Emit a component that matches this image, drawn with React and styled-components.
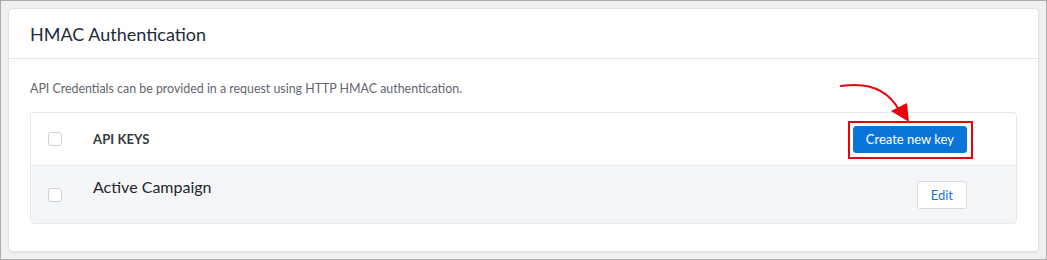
import React from "react";
import styled, { createGlobalStyle } from "styled-components";

const GlobalStyle = createGlobalStyle`
  html, body {
    margin: 0;
    padding: 0;
    background: #ffffff;
  }
  body {
    font-family: Lato, "Open Sans", "Liberation Sans", sans-serif;
    -webkit-font-smoothing: antialiased;
  }
  * {
    box-sizing: border-box;
  }
`;

const Frame = styled.div`
  width: 1047px;
  height: 260px;
  padding: 7px;
  border: 1px solid #ababab;
  background: #f0f0f0;
`;

const Card = styled.section`
  height: 244px;
  background: #ffffff;
  border: 1px solid #e2e2e2;
  border-radius: 4px;
  box-shadow: 0 1px 2px rgba(0, 0, 0, 0.06);
`;

const CardHeader = styled.header`
  display: flex;
  align-items: center;
  height: 50px;
  padding: 0 21px;
  border-bottom: 1px solid #e4e6ea;
  h2 {
    margin: 0;
    font-size: 18px;
    font-weight: 400;
    color: #1d2b3a;
  }
`;

const CardBody = styled.div`
  padding: 22px 21px 0;
`;

const Description = styled.p`
  margin: 0 0 15px;
  font-size: 12.4px;
  line-height: 16px;
  color: #5f6670;
`;

const Table = styled.div`
  border: 1px solid #e6e8ec;
  border-radius: 4px;
`;

const Row = styled.div`
  display: grid;
  grid-template-columns: 45px 1fr auto;
  align-items: ${(props) => (props.head ? "center" : "start")};
  height: ${(props) => (props.head ? "53px" : "57px")};
  padding: 0 49px 0 17px;
  background: ${(props) => (props.shaded ? "#f5f6f8" : "#ffffff")};
  border-bottom: ${(props) => (props.head ? "1px solid #e6e8ec" : "none")};
  border-radius: ${(props) => (props.head ? "4px 4px 0 0" : "0 0 4px 4px")};
`;

const CheckCell = styled.div`
  align-self: center;
  display: flex;
`;

const Checkbox = styled.span`
  display: block;
  width: 14px;
  height: 14px;
  border: 1px solid #cdd1d6;
  border-radius: 3px;
  background: #ffffff;
`;

const HeadLabel = styled.div`
  font-size: 13px;
  font-weight: 700;
  letter-spacing: 0.1px;
  color: #333a42;
`;

const Name = styled.div`
  padding-top: 11px;
  font-size: 16px;
  color: #1f2630;
`;

const ActionCell = styled.div`
  position: relative;
  align-self: center;
  display: flex;
`;

const Button = styled.button`
  height: ${(props) => (props.primary ? "27px" : "28px")};
  padding: 0 ${(props) => (props.primary ? "12px" : "13px")};
  font-family: inherit;
  font-size: 13px;
  border-radius: 3px;
  cursor: pointer;
  color: ${(props) => (props.primary ? "#ffffff" : "#1a73d9")};
  background: ${(props) => (props.primary ? "#0b74d9" : "#ffffff")};
  border: 1px solid ${(props) => (props.primary ? "#0b74d9" : "#d9dce0")};
`;

const Highlight = styled.div`
  position: absolute;
  left: -5px;
  right: -6px;
  top: -5px;
  bottom: -6px;
  border: 2px solid #e8000b;
  pointer-events: none;
`;

const Arrow = styled.svg`
  position: absolute;
  left: -16px;
  top: -42px;
  overflow: visible;
  pointer-events: none;
`;

export default function App() {
  return (
    <>
      <GlobalStyle />
      <Frame>
        <Card>
          <CardHeader>
            <h2>HMAC Authentication</h2>
          </CardHeader>
          <CardBody>
            <Description>
              API Credentials can be provided in a request using HTTP HMAC authentication.
            </Description>
            <Table>
              <Row head>
                <CheckCell>
                  <Checkbox />
                </CheckCell>
                <HeadLabel>API KEYS</HeadLabel>
                <ActionCell>
                  <Button primary>Create new key</Button>
                  <Highlight />
                  <Arrow width="80" height="45" viewBox="0 0 80 45">
                    <path
                      d="M4 2 C 30 -2, 50 4, 62 26"
                      fill="none"
                      stroke="#e8000b"
                      strokeWidth="2"
                      strokeLinecap="round"
                    />
                    <polygon points="54,27 70,19 72,38" fill="#e8000b" />
                  </Arrow>
                </ActionCell>
              </Row>
              <Row shaded>
                <CheckCell>
                  <Checkbox />
                </CheckCell>
                <Name>Active Campaign</Name>
                <ActionCell>
                  <Button>Edit</Button>
                </ActionCell>
              </Row>
            </Table>
          </CardBody>
        </Card>
      </Frame>
    </>
  );
}
